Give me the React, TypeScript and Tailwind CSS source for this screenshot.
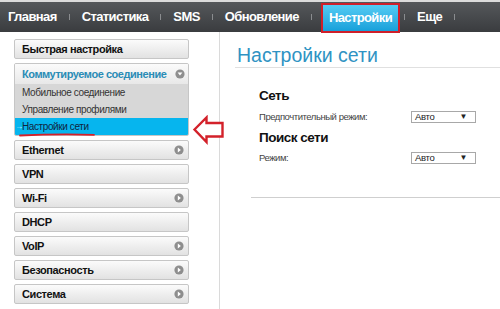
import React from "react";

function Sep() {
  return <span className="w-px h-[6px] bg-[#8a8c8f] shrink-0" />;
}

function Circle({ down }: { down?: boolean }) {
  return (
    <svg width="10" height="10" viewBox="0 0 10 10" className="shrink-0">
      <circle cx="5" cy="5" r="4.6" fill="#8e8e8e" />
      {down ? (
        <polygon points="2.6,3.6 7.4,3.6 5,6.6" fill="#fff" />
      ) : (
        <polygon points="3.8,2.6 3.8,7.4 6.9,5" fill="#fff" />
      )}
    </svg>
  );
}

function Item({ label, arrow }: { label: string; arrow?: boolean }) {
  return (
    <div className="h-[20px] rounded-[2px] border border-[#c6c6c6] bg-linear-to-b from-[#fbfbfb] to-[#e2e2e2] flex items-center justify-between pl-[7px] pr-[4px] text-[11px] tracking-[-0.4px] font-bold text-[#111] whitespace-nowrap">
      <span>{label}</span>
      {arrow && <Circle />}
    </div>
  );
}

function Select() {
  return (
    <div className="w-[65px] h-[12px] border border-[#a8a8a8] bg-white flex items-center justify-between pl-[3px] pr-[8px] text-[9.5px] tracking-[-0.3px] text-[#222] leading-none">
      <span>Авто</span>
      <span className="text-[8px]">▼</span>
    </div>
  );
}

export default function App() {
  return (
    <div className="relative w-[500px] h-[309px] bg-white overflow-hidden font-['Liberation_Sans',Arial,sans-serif]">
      <div className="h-[2px] bg-[#dcdcdc]" />
      <div className="h-[30px] bg-linear-to-b from-[#55585b] to-[#3a3c3f] flex items-center pl-[8px] gap-[12px] text-white font-bold text-[13px] tracking-[-0.6px] whitespace-nowrap">
        <span>Главная</span>
        <Sep />
        <span>Статистика</span>
        <Sep />
        <span>SMS</span>
        <Sep />
        <span>Обновление</span>
        <Sep />
        <div className="h-[30px] translate-y-[1px] -ml-[3px] -mr-[8px] border-2 border-[#cf1f2a] bg-linear-to-b from-[#52ccf4] to-[#15a0da] flex items-center px-[6px]">
          Настройки
        </div>
        <Sep />
        <span>Еще</span>
        <Sep />
      </div>

      <div className="flex h-[277px]">
        <div className="w-[219px] shrink-0 pl-[14px] pt-[7px]">
          <div className="w-[175px] flex flex-col gap-[4px]">
            <Item label="Быстрая настройка" />
            <div className="rounded-[2px] border border-[#c6c6c6] overflow-hidden">
              <div className="h-[20px] bg-linear-to-b from-[#fbfbfb] to-[#e8e8e8] flex items-center justify-between pl-[7px] pr-[3px] text-[11px] tracking-[-0.45px] font-bold text-[#2a8cb6] whitespace-nowrap">
                <span>Коммутируемое соединение</span>
                <Circle down />
              </div>
              <div className="bg-[#d7d7d7] text-[10px] tracking-[-0.4px] text-[#333] whitespace-nowrap">
                <div className="h-[17px] flex items-center pl-[7px]">Мобильное соединение</div>
                <div className="h-[17px] flex items-center pl-[7px]">Управление профилями</div>
                <div className="h-[17px] flex items-center bg-[#06b5ee] text-[#10253f]">
                  <span className="text-[8px] text-[#c9f1ff] w-[7px]">→</span>
                  <span>Настройки сети</span>
                </div>
              </div>
            </div>
            <Item label="Ethernet" arrow />
            <Item label="VPN" />
            <Item label="Wi-Fi" arrow />
            <Item label="DHCP" />
            <Item label="VoIP" arrow />
            <Item label="Безопасность" arrow />
            <Item label="Система" arrow />
          </div>
        </div>

        <div className="flex-1 border-l border-[#dadada] pt-[12px]">
          <div className="ml-[15px] border-b border-[#e0e0e0] h-[24px] flex items-center pl-[2px] text-[19.5px] text-[#2f93c3] whitespace-nowrap">
            Настройки сети
          </div>
          <div className="ml-[15px] pl-[24px]">
            <div className="mt-[20px] h-[16px] flex items-center text-[13.5px] tracking-[-0.5px] font-bold text-[#111]">Сеть</div>
            <div className="mt-[7px] h-[12px] flex items-center text-[9.5px] tracking-[-0.45px] text-[#444] whitespace-nowrap">
              <span className="w-[152px]">Предпочтительный режим:</span>
              <Select />
            </div>
            <div className="mt-[7px] h-[16px] flex items-center text-[13.5px] tracking-[-0.5px] font-bold text-[#111]">Поиск сети</div>
            <div className="mt-[6px] h-[12px] flex items-center text-[9.5px] tracking-[-0.45px] text-[#444]">
              <span className="w-[152px]">Режим:</span>
              <Select />
            </div>
          </div>
          <div className="ml-[31px] mt-[33px] h-px bg-[#cfcfcf]" />
        </div>
      </div>

      <svg className="absolute left-[19px] top-[132px]" width="78" height="6" viewBox="0 0 78 6">
        <path d="M1 3.5 Q 38 1.8 75 2.8" stroke="#d4202a" strokeWidth="1.8" fill="none" strokeLinecap="round" />
      </svg>

      <svg className="absolute left-[192px] top-[115px]" width="33" height="30" viewBox="0 0 33 30">
        <polygon
          points="2.5,14.5 14.5,2.5 14.5,8 30.5,8 30.5,21.5 14.5,21.5 14.5,27"
          fill="#fff"
          stroke="#d3212a"
          strokeWidth="2.4"
          strokeLinejoin="miter"
        />
      </svg>
    </div>
  );
}
